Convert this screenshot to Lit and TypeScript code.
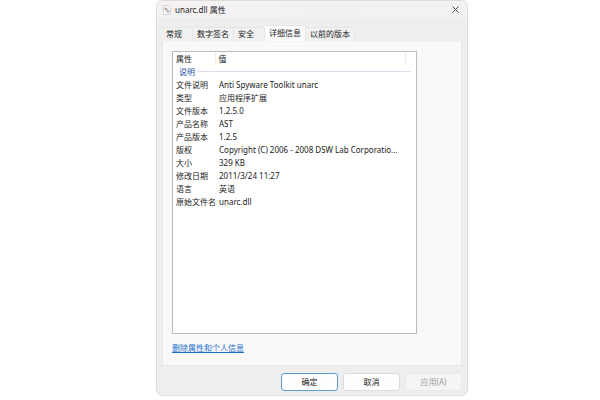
import { LitElement, html, css } from "lit";
import { customElement, state } from "lit/decorators.js";
import { classMap } from "lit/directives/class-map.js";

const TABS = ["常规", "数字签名", "安全", "详细信息", "以前的版本"];

const DETAILS: [string, string][] = [
  ["文件说明", "Anti Spyware Toolkit unarc"],
  ["类型", "应用程序扩展"],
  ["文件版本", "1.2.5.0"],
  ["产品名称", "AST"],
  ["产品版本", "1.2.5"],
  ["版权", "Copyright (C) 2006 - 2008 DSW Lab Corporatio..."],
  ["大小", "329 KB"],
  ["修改日期", "2011/3/24 11:27"],
  ["语言", "英语"],
  ["原始文件名", "unarc.dll"],
];

@customElement("property-list")
class PropertyList extends LitElement {
  static styles = css`
    :host {
      display: block;
      background: #fff;
      border: 1px solid #b9bbbd;
      padding: 0 5px 0 3px;
      box-sizing: border-box;
    }
    table {
      width: 100%;
      border-collapse: collapse;
      table-layout: fixed;
    }
    .name-col {
      width: 39px;
    }
    .end-col {
      width: 6px;
    }
    th,
    td {
      height: 13px;
      padding: 0;
      line-height: 13px;
      font-weight: 400;
      text-align: left;
      white-space: nowrap;
    }
    td {
      padding-left: 4px;
    }
    thead th + th {
      border-left: 1px solid #ececec;
      padding-left: 3px;
    }
    .group {
      display: flex;
      align-items: center;
      gap: 2px;
      padding-left: 3px;
      color: #2b4da8;
    }
    .group::after {
      content: "";
      flex: 1;
      height: 1px;
      background: #d5e0ea;
    }
  `;

  render() {
    return html`
      <table>
        <colgroup>
          <col class="name-col" />
          <col />
          <col class="end-col" />
        </colgroup>
        <thead>
          <tr>
            <th scope="col">属性</th>
            <th scope="col">值</th>
            <th></th>
          </tr>
        </thead>
        <tbody>
          <tr>
            <th colspan="3" scope="rowgroup"><div class="group">说明</div></th>
          </tr>
          ${DETAILS.map(
            ([name, value]) => html`
              <tr>
                <th scope="row">${name}</th>
                <td colspan="2">${value}</td>
              </tr>
            `
          )}
        </tbody>
      </table>
    `;
  }
}

@customElement("app-root")
class AppRoot extends LitElement {
  static styles = css`
    :host {
      display: block;
      min-height: 100vh;
      box-sizing: border-box;
      padding: 0 22% 4px 26%;
      background: #fff;
      color: #222;
      font: 8px/12px "Noto Sans", "Noto Sans CJK SC", sans-serif;
    }
    .dialog {
      display: flex;
      flex-direction: column;
      min-height: calc(100vh - 4px);
      box-sizing: border-box;
      padding: 0 5px 4px;
      background: #eee;
      border: 1px solid #dedede;
      border-radius: 6px;
      overflow: hidden;
    }
    .titlebar {
      display: flex;
      align-items: center;
      gap: 4px;
      height: 17px;
      margin: 0 -5px;
      padding: 0 7px 0 6px;
      background: linear-gradient(90deg, #f5f1f2, #f0f2f3);
    }
    .file-icon {
      width: 8px;
      height: 10px;
    }
    h1 {
      flex: 1;
      margin: 0;
      font-size: 8px;
      font-weight: 400;
    }
    button {
      font: inherit;
      color: inherit;
      padding: 0;
      margin: 0;
    }
    .close {
      display: flex;
      border: 0;
      background: none;
    }
    .close svg {
      width: 9px;
      height: 9px;
    }
    .tabs {
      display: flex;
      align-items: flex-end;
      height: 16px;
      margin-top: 7px;
    }
    .tab {
      min-width: 31px;
      height: 14px;
      padding: 0 4px 2px;
      border: 1px solid #e6e6e6;
      border-width: 1px 1px 0 0;
      background: #f1f1f1;
      line-height: 12px;
      text-align: left;
      white-space: nowrap;
    }
    .tab.active {
      height: 16px;
      background: #fcfcfc;
    }
    .panel {
      flex: 1;
      display: flex;
      flex-direction: column;
      align-items: flex-start;
      padding: 9px 44px 11px 9px;
      background: #f9f9f9;
      border: 1px solid #e8e8e8;
      border-top-color: #f2f2f2;
    }
    property-list {
      flex: 1;
      align-self: stretch;
    }
    .remove {
      margin-top: 8px;
      color: #1a6fc9;
      line-height: 12px;
    }
    .actions {
      display: flex;
      justify-content: flex-end;
      gap: 5px;
      margin-top: 7px;
    }
    .action {
      width: 57px;
      height: 18px;
      background: #fefefe;
      border: 1px solid #dcdcdc;
      border-radius: 3px;
      line-height: 14px;
    }
    .action.primary {
      border-color: #5a9fd4;
    }
    .action:disabled {
      color: #a0a0a0;
      background: #f5f5f5;
      border-color: #eaeaea;
    }
  `;

  @state() private active = 3;

  render() {
    return html`
      <main class="dialog" role="dialog" aria-labelledby="title">
        <header class="titlebar">
          <svg class="file-icon" viewBox="0 0 8 10" aria-hidden="true">
            <path d="M.5.5h5l2 2v7h-7z" fill="#fafafa" stroke="#d2d2d2" />
            <circle cx="3" cy="4" r="1" fill="none" stroke="#8b9095" />
            <circle cx="5" cy="6.4" r="1" fill="none" stroke="#9a9fa3" />
          </svg>
          <h1 id="title">unarc.dll 属性</h1>
          <button class="close" aria-label="关闭">
            <svg viewBox="0 0 9 9" aria-hidden="true">
              <path d="M1.5 1.5l6 6m0-6l-6 6" fill="none" stroke="#444" />
            </svg>
          </button>
        </header>
        <nav class="tabs" role="tablist">
          ${TABS.map(
            (label, i) => html`
              <button
                role="tab"
                aria-selected=${i === this.active}
                class=${classMap({ tab: true, active: i === this.active })}
                @click=${() => (this.active = i)}
              >
                ${label}
              </button>
            `
          )}
        </nav>
        <section class="panel" role="tabpanel">
          <property-list></property-list>
          <a class="remove" href="#">删除属性和个人信息</a>
        </section>
        <footer class="actions">
          <button class="action primary">确定</button>
          <button class="action">取消</button>
          <button class="action" disabled>应用(A)</button>
        </footer>
      </main>
    `;
  }
}
